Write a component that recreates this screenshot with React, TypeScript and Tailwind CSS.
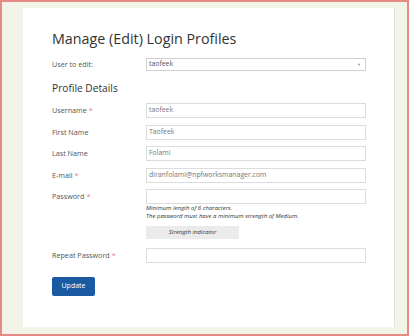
import React from "react";

const fields = [
  { label: "Username", required: true, value: "taofeek" },
  { label: "First Name", required: false, value: "Taofeek" },
  { label: "Last Name", required: false, value: "Folami" },
  { label: "E-mail", required: true, value: "diranfolami@npfworksmanager.com" },
];

function Label({ text, required }: { text: string; required?: boolean }) {
  return (
    <label className="flex h-[15px] w-[94px] shrink-0 items-center text-[7.2px] text-[#555]">
      {text}
      {required && <span className="ml-[2px] text-[#e07b7b]">*</span>}
    </label>
  );
}

function TextBox({ value }: { value?: string }) {
  return (
    <div className="flex h-[15px] w-[220px] items-center border border-[#dcdcdc] bg-white px-[2px] text-[6.9px] text-[#777]">
      {value}
    </div>
  );
}

export default function App() {
  return (
    <div
      className="h-[336px] w-[409px] overflow-hidden border-2 border-[#e48b84] bg-[#f3f3ea] pl-[21px] pr-[12px] pt-[6px]"
      style={{ fontFamily: '"Open Sans", "Liberation Sans", sans-serif' }}
    >
      <div className="h-[319px] border-r border-[#e2e2dc] bg-white pl-[29px] pt-[20.5px]">
        <h1 className="text-[14.3px] leading-[20px] text-[#333]">Manage (Edit) Login Profiles</h1>

        <div className="mt-[8.5px] flex items-center">
          <Label text="User to edit:" />
          <div className="flex h-[13px] w-[220px] items-center justify-between border border-[#d0d0d0] pl-[2px] pr-[4px] text-[6.9px] text-[#555]">
            <span>taofeek</span>
            <span className="text-[4px] text-[#999]">▼</span>
          </div>
        </div>

        <h2 className="mt-[8.5px] text-[10.2px] leading-[14px] text-[#333]">Profile Details</h2>

        <div className="mt-[8.5px] flex flex-col gap-[6.5px]">
          {fields.map((f) => (
            <div key={f.label} className="flex items-center">
              <Label text={f.label} required={f.required} />
              <TextBox value={f.value} />
            </div>
          ))}
          <div className="flex">
            <Label text="Password" required />
            <div>
              <TextBox />
              <p className="text-[6px] italic leading-[8px] text-[#333]">
                Minimum length of 6 characters.
                <br />
                The password must have a minimum strength of Medium.
              </p>
              <div className="mt-[6px] flex h-[13px] w-[93px] items-center justify-center bg-[#ebebeb] text-[6px] italic text-[#333]">
                Strength indicator
              </div>
            </div>
          </div>
        </div>

        <div className="mt-[9px] flex items-center">
          <Label text="Repeat Password" required />
          <TextBox />
        </div>

        <button className="mt-[14px] h-[19px] w-[43px] rounded-[2px] bg-[#1a5aa3] text-[7px] text-white">
          Update
        </button>
      </div>
    </div>
  );
}
